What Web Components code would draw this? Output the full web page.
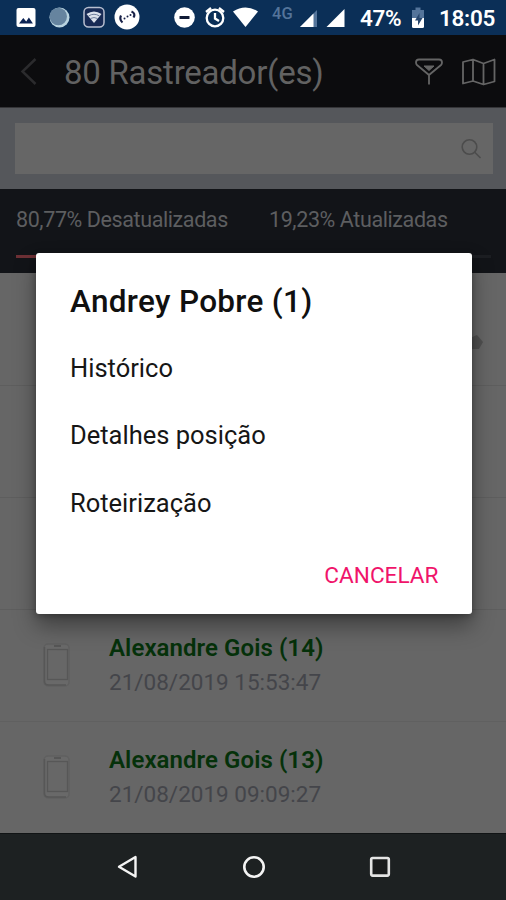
<!DOCTYPE html>
<html lang="pt-BR">
<head>
<meta charset="utf-8">
<title>Rastreadores</title>
<style>
html,body{margin:0;padding:0;background:#666}
body{width:506px;height:900px;overflow:hidden;font-family:Roboto,"Noto Sans",sans-serif}
</style>
</head>
<body>
<tracker-app></tracker-app>
<script>
function define(name, html) {
  const t = document.createElement('template');
  t.innerHTML = html;
  customElements.define(name, class extends HTMLElement {
    constructor() {
      super();
      this.attachShadow({ mode: 'open' }).appendChild(t.content.cloneNode(true));
    }
  });
}

define('status-bar', `
<style>
:host{display:flex;height:35px;background:#0b2f57;color:#fff;font-size:22.500px;font-weight:600;line-height:37px;white-space:nowrap}
svg{flex:none;display:block}
.g{width:33px;font-size:16.500px;line-height:27px;color:#54749a;font-weight:500;margin-left:-234px}
.p{margin-left:55px;width:54px;letter-spacing:-.4px}
.t{margin-left:25px;letter-spacing:-.3px}
</style>
<svg width="506" height="35" viewBox="0 0 506 35">
  <rect x="16.500" y="8" width="19" height="19" rx="2" fill="#fff"/>
  <path d="M19 23.500l4.300-5.500 2.900 3.600 2.700-4 4 5.900z" fill="#0b2354"/>
  <circle cx="59.500" cy="17.500" r="10" fill="#b9d3df"/><circle cx="58.300" cy="16.500" r="8.700" fill="#66849f"/>
  <rect x="84" y="7.500" width="20" height="19.500" rx="4.500" fill="#172a54" stroke="#b8bfd0" stroke-width="1.500"/>
  <path d="M86.500 14q7.500-5 15 0l-7.500 9z" fill="#dce2eb"/><path d="M88.500 16q5.500-3.500 11 0M90.500 18.500q3.500-2 7 0" fill="none" stroke="#71809c"/>
  <circle cx="127" cy="17" r="12.500" fill="#fff"/>
  <path d="M121 15.500q-2 4 1.500 7" fill="none" stroke="#172047" stroke-width="2.200"/>
  <path d="M131.500 11.500q4.500 2 2 6" fill="none" stroke="#172047" stroke-width="2.200"/>
  <g fill="#172047"><circle cx="124.500" cy="18.500" r="1"/><circle cx="127.500" cy="16.500" r="1"/><circle cx="130.500" cy="15" r="1"/></g>
  <circle cx="184.500" cy="17.500" r="10.300" fill="#fff"/><rect x="179.500" y="16" width="10" height="3" rx=".5" fill="#111b36"/>
  <g fill="none" stroke="#fff" stroke-width="2.300"><circle cx="215" cy="18" r="8.300"/><path d="M215 13v5.500l4 2.500M206 12l5-4M224 12l-5-4"/></g>
  <path d="M233 11.500q12.500-8 25 0l-12.500 15.500z" fill="#fff"/>
  <path d="M300 27L317 10v17z" fill="#54749a"/><path d="M300 27L313.500 13.500V27z" fill="#fff"/>
  <path d="M326.500 27L344.500 9v18z" fill="#fff"/>
  <path d="M412 10h3.500V7.500h5V10h3.500v8h-12z" fill="#54749a"/><path d="M412 18h12v8.500q0 1.500-1.500 1.500h-9q-1.500 0-1.500-1.500z" fill="#fff"/><path d="M419.500 13l-4.500 7.500h3v5l4.500-7.500h-3z" fill="#27466d"/>
</svg>
<span class="g">4G</span><span class="p">47%</span><span class="t">18:05</span>
`);

define('app-header', `
<style>
:host{display:flex;box-sizing:border-box;height:73px;background:#0c0c0e;color:#626262;padding:0 10px 0 19px;border-bottom:1px solid #353538}
svg{flex:none;display:block;overflow:visible}
h1{margin:0 0 0 25px;width:351px;font-size:33px;font-weight:400;line-height:75px;letter-spacing:-.25px;white-space:nowrap}
</style>
<svg width="20" height="72" viewBox="19 35 20 72"><path d="M35.500 59L22.500 71.500l13 12.500" fill="none" stroke="#2b2b2d" stroke-width="2.500"/></svg>
<h1><slot></slot></h1>
<svg width="81" height="72" viewBox="415 35 81 72" fill="none" stroke="#656565" stroke-width="1.800" stroke-linejoin="round">
<path d="M419 59.500h20q3 0 3 3 0 1.500-1 2.500l-12 10-12-10q-1-1-1-2.500 0-3 3-3zM429 75v9.500"/><path d="M424 66h10l-5 4.500z" fill="#656565" stroke-width="1"/>
<path d="M463 62l10-2.500 10.500 4 11-4V81.500l-11 3L473 81l-10 2.500zM473 59.500V81M483.500 63.500v21"/></svg>
`);

define('search-box', `
<style>
:host{display:block;box-sizing:border-box;height:81px;background:#55575b;padding:15px 13px 15px 15px}
div{display:flex;justify-content:flex-end;align-items:center;height:51px;background:#666;padding-right:11px}
</style>
<div><svg width="22" height="22" viewBox="0 0 22 22" fill="none" stroke="#4c4c4c" stroke-width="1.600"><circle cx="9.500" cy="9" r="7.300"/><path d="M14.500 14l6 6"/></svg></div>
`);

define('update-stats', `
<style>
:host{display:block;box-sizing:border-box;height:84px;background:#121418;color:#5d5e60;padding:16px 15px 0 16px;font-size:21.500px;line-height:30px;letter-spacing:-.4px;white-space:nowrap}
.r{display:grid;grid-template-columns:253px 1fr}
.bar{height:3px;margin-top:20px;background:#1c1e22}
.bar i{display:block;width:80.77%;height:3px;background:#6d3035}
</style>
<div class="r"><span>80,77% Desatualizadas</span><span>19,23% Atualizadas</span></div>
<div class="bar"><i></i></div>
`);

define('tracker-row', `
<style>
:host{display:flex;box-sizing:border-box;height:112px;padding:21px 0 0 42px;border-bottom:1px solid #606060;background:#666}
svg{flex:none;display:block;margin-top:11px}
div{margin-left:38px;white-space:nowrap}
b{display:block;font-size:24px;line-height:34px;font-weight:600;letter-spacing:.07px;color:#05310a}
span{display:block;font-size:22.500px;line-height:35px;color:#44454a}
</style>
<svg width="29" height="46" viewBox="0 0 29 46"><rect x="2" y="2" width="25" height="42" rx="4" fill="#696969" stroke="#606060" stroke-width="1.500"/><path d="M2.500 5v34q0 4 4 4H24" fill="none" stroke="#575757" stroke-width="1.500"/><rect x="5.500" y="7.500" width="20" height="30" fill="#676767" stroke="#575757" stroke-width="1.300"/><path d="M12 4h7" stroke="#505050" stroke-width="1.500"/></svg>
<div><b><slot name="name"></slot></b><span><slot name="date"></slot></span></div>
`);

define('action-dialog', `
<style>
:host{display:flex;flex-direction:column;box-sizing:border-box;width:436px;height:361px;background:#fff;border-radius:3px;padding:29px 33px 0 34.500px;color:#161616;box-shadow:0 12px 22px rgba(0,0,0,.38),0 2px 6px rgba(0,0,0,.25);white-space:nowrap}
h2{margin:0 0 13px;font-size:31.500px;line-height:40px;font-weight:500;letter-spacing:.32px;color:#101010}
nav{display:flex;flex-direction:column;font-size:25.500px;line-height:67.400px}
button{font:400 22.600px/30px Roboto,sans-serif;background:none;border:0;padding:0;color:#f0146a;align-self:flex-end;margin-top:24px}
</style>
<h2><slot></slot></h2>
<nav><slot name="items"></slot></nav>
<button>CANCELAR</button>
`);

define('nav-bar', `
<style>
:host{display:flex;height:67px;background:#1d2122;border-top:1px solid #111415;box-sizing:border-box;justify-content:space-between;align-items:center;padding:0 114px 0 115px}
</style>
<svg width="24" height="26" viewBox="0 0 24 26" fill="none" stroke="#f4f4f4" stroke-width="2.400" stroke-linejoin="round"><path d="M20.500 3v19.500L4 12.750z"/></svg>
<svg width="26" height="26" viewBox="0 0 26 26" fill="none" stroke="#f4f4f4" stroke-width="2.600"><circle cx="13" cy="13" r="9.700"/></svg>
<svg width="24" height="26" viewBox="0 0 24 26" fill="#1a1c1d" stroke="#e4e4e4" stroke-width="2.600"><rect x="3.200" y="4" width="17.600" height="17.600" rx="1.500"/></svg>
`);

define('tracker-app', `
<style>
:host{display:flex;flex-direction:column;position:relative;width:506px;height:900px;overflow:hidden;background:#666}
main{height:561px;overflow:hidden}
.blank{display:flex;box-sizing:border-box;height:112px;border-bottom:1px solid #5e5e5e;background:#666}
.blank:first-child{height:113px}
.blank svg{margin:60px 0 0 470px}
tracker-row:last-child{border-bottom:0}
action-dialog{position:absolute;left:35.500px;top:253px}
</style>
<status-bar></status-bar>
<app-header>80 Rastreador(es)</app-header>
<search-box></search-box>
<update-stats></update-stats>
<main>
<div class="blank"><svg width="14" height="18" viewBox="0 0 14 18"><path d="M0 5l7-3 6 7-4 7H0z" fill="#505050"/></svg></div>
<div class="blank"></div><div class="blank"></div>
<tracker-row><span slot="name">Alexandre Gois (14)</span><span slot="date">21/08/2019 15:53:47</span></tracker-row>
<tracker-row><span slot="name">Alexandre Gois (13)</span><span slot="date">21/08/2019 09:09:27</span></tracker-row>
</main>
<nav-bar></nav-bar>
<action-dialog>Andrey Pobre (1)<span slot="items">Histórico</span><span slot="items">Detalhes posição</span><span slot="items">Roteirização</span></action-dialog>
`);
</script>
</body>
</html>
